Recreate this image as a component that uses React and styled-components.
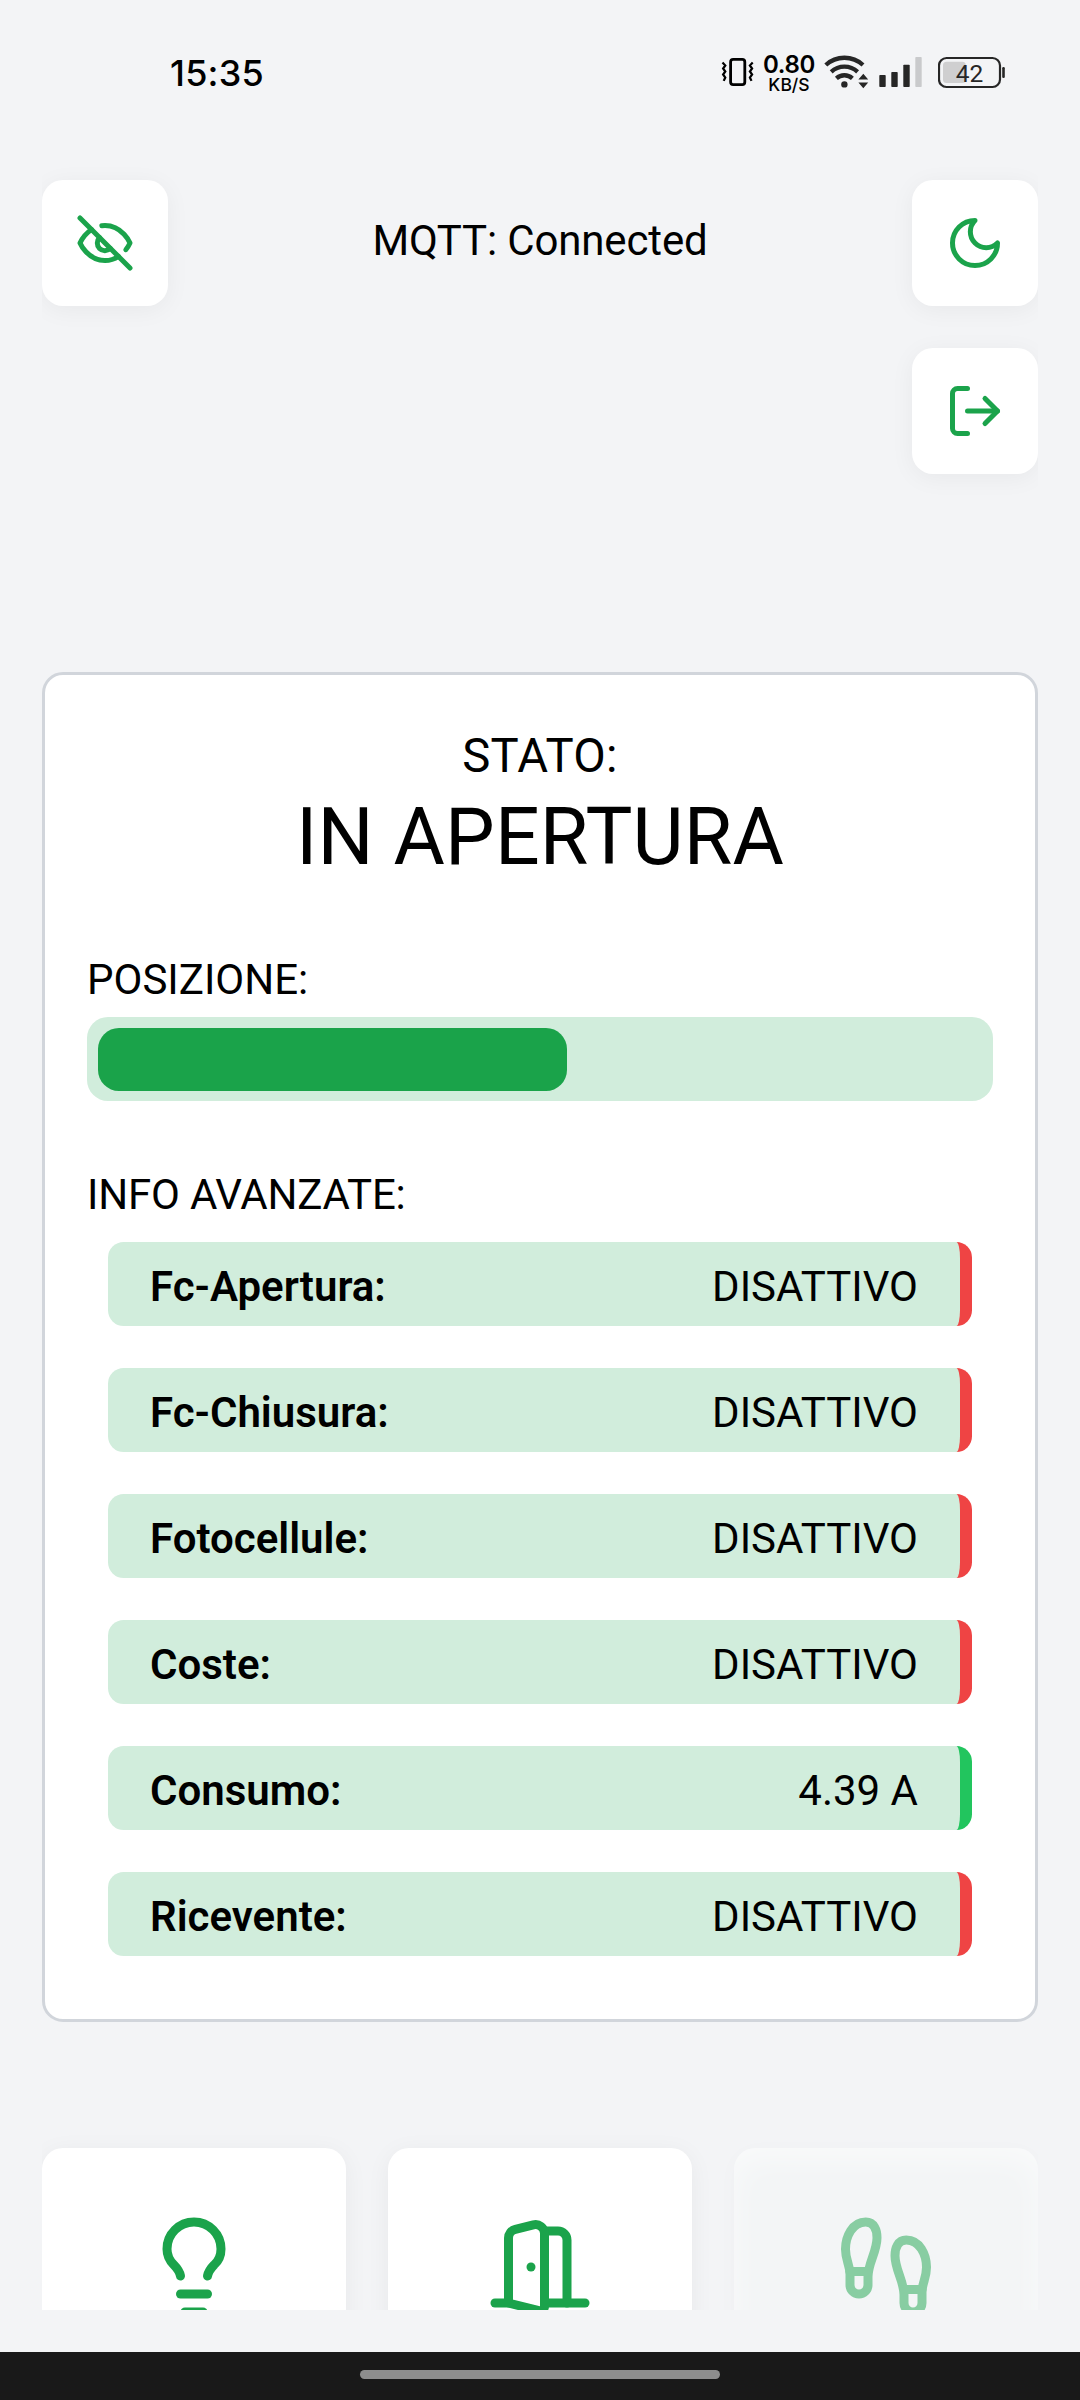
import React from "react";
import styled, { createGlobalStyle, css } from "styled-components";
import { Footprints, Lightbulb } from "lucide-react";

const GlobalStyle = createGlobalStyle`
  * { box-sizing: border-box; }
  body { margin: 0; background: #f3f4f6; }
`;

const Screen = styled.div`
  width: 1080px;
  height: 2400px;
  display: flex;
  flex-direction: column;
  overflow: hidden;
  background: #f3f4f6;
  color: #000;
  font-family: Roboto, "Liberation Sans", sans-serif;
  font-size: 42px;
  line-height: 63px;
`;

const StatusBar = styled.header`
  height: 138px;
  flex: none;
  display: flex;
  align-items: flex-start;
  justify-content: space-between;
  padding: 48px 75px 0 170px;
  font-family: Inter, sans-serif;
`;

const Clock = styled.time`
  padding-top: 1px;
  font-size: 36px;
  line-height: 48px;
  font-weight: 500;
  letter-spacing: 0.2px;
`;

const StatusIcons = styled.div`
  display: flex;
  align-items: flex-start;
`;

const StatusGlyph = styled.svg`
  display: block;
  flex: none;
  margin-right: ${(p) => p.$after || 0}px;
`;

const NetSpeed = styled.div`
  width: 54px;
  margin-right: 8px;
  padding-top: 4px;
  display: flex;
  flex-direction: column;
  align-items: center;
  font-weight: 600;
  white-space: nowrap;
`;

const SpeedValue = styled.span`
  font-size: 24px;
  line-height: 25px;
  letter-spacing: -0.3px;
`;

const SpeedUnit = styled.span`
  font-size: 17.5px;
  font-weight: 500;
  line-height: 15px;
`;

const Battery = styled.div`
  position: relative;
  width: 67px;
  height: 48px;
`;

const BatteryLevel = styled.span`
  position: absolute;
  left: 0;
  top: 10px;
  width: 63px;
  text-align: center;
  font: 400 24.5px/31px Roboto, sans-serif;
  color: #262626;
`;

const Viewport = styled.main`
  height: 2172px;
  flex: none;
  margin: 0 42px;
  padding-top: 42px;
  overflow: hidden;
  display: flex;
  flex-direction: column;
`;

const Toolbar = styled.div`
  height: 492px;
  flex: none;
  display: flex;
  justify-content: space-between;
  align-items: flex-start;
`;

const ToolColumn = styled.div`
  width: 126px;
  display: flex;
  flex-direction: column;
  gap: 42px;
`;

const raised = css`
  background: #fff;
  box-shadow: 0 4px 24px rgba(0, 0, 0, 0.05);
`;

const IconButton = styled.button`
  width: 126px;
  height: 126px;
  padding: 0;
  border: 0;
  border-radius: 21px;
  display: flex;
  align-items: center;
  justify-content: center;
  color: #1ba34b;
  ${raised}
`;

const Connection = styled.div`
  padding-top: 29px;
  letter-spacing: -0.15px;
`;

const StatusCard = styled.section`
  height: 1350px;
  flex: none;
  padding: 42px;
  border: 3px solid #d1d5db;
  border-radius: 21px;
  background: #fff;
`;

const StateCaption = styled.div`
  height: 73px;
  font-size: 47.25px;
  line-height: 79px;
  letter-spacing: 0.3px;
  text-align: center;
`;

const StateValue = styled.div`
  font-size: 78.75px;
  line-height: 94px;
  letter-spacing: 0.15px;
  text-align: center;
`;

const SectionLabel = styled.div`
  margin-top: ${(p) => p.$before}px;
  margin-bottom: ${(p) => p.$after}px;
  letter-spacing: ${(p) => p.$tracking || 0}px;
`;

const Track = styled.div`
  height: 84px;
  padding: 10.5px;
  border-radius: 21px;
  background: #d1eddc;
`;

const TrackFill = styled.div`
  height: 63px;
  border-radius: 21px;
  background: #1aa34a;
`;

const InfoList = styled.dl`
  margin: 0;
  padding: 0 21px;
  display: flex;
  flex-direction: column;
  gap: 42px;
`;

const InfoRow = styled.div`
  height: 84px;
  padding: 5px 42px 0;
  display: flex;
  align-items: center;
  justify-content: space-between;
  border-right: 12px solid ${(p) => (p.$on ? "#22c55e" : "#ef4444")};
  border-radius: 15.75px;
  background: #d1eddc;
`;

const InfoName = styled.dt`
  font-weight: 600;
`;

const InfoValue = styled.dd`
  margin: 0;
`;

const Actions = styled.div`
  margin-top: 126px;
  flex: none;
  display: grid;
  grid-template-columns: repeat(3, 1fr);
  gap: 42px;
`;

const ActionCard = styled.button`
  height: 237px;
  padding: 65px 0 0;
  border: 0;
  border-radius: 21px;
  display: flex;
  align-items: flex-start;
  justify-content: center;
  color: #1ba34b;
  ${raised}
  ${(p) =>
    p.disabled &&
    css`
      color: #88cda2;
      background: #f3f5f6;
      box-shadow: inset 0 10px 32px rgba(255, 255, 255, 0.55), 0 4px 24px rgba(0, 0, 0, 0.02);
    `}
`;

const NavBar = styled.footer`
  height: 48px;
  margin-top: auto;
  flex: none;
  display: flex;
  justify-content: center;
  padding-top: 18px;
  background: #191919;
`;

const NavHandle = styled.div`
  width: 360px;
  height: 9px;
  border-radius: 5px;
  background: #8d8d8d;
`;

function Icon({ size, children }) {
  return (
    <svg
      width={size}
      height={size}
      viewBox="0 0 24 24"
      fill="none"
      stroke="currentColor"
      strokeWidth="2"
      strokeLinecap="round"
      strokeLinejoin="round"
    >
      {children}
    </svg>
  );
}

const EyeOffIcon = () => (
  <Icon size={60}>
    <path d="M9.88 9.88a3 3 0 1 0 4.24 4.24" />
    <path d="M10.73 5.08A10.43 10.43 0 0 1 12 5c7 0 10 7 10 7a13.16 13.16 0 0 1-1.67 2.68" />
    <path d="M6.61 6.61A13.526 13.526 0 0 0 2 12s3 7 10 7a9.74 9.74 0 0 0 5.39-1.61" />
    <path d="M2 2l20 20" />
  </Icon>
);

const MoonIcon = () => (
  <Icon size={60}>
    <path d="M12 3a6 6 0 0 0 9 9 9 9 0 1 1-9-9Z" />
  </Icon>
);

const LogOutIcon = () => (
  <Icon size={60}>
    <path d="M9 21H5a2 2 0 0 1-2-2V5a2 2 0 0 1 2-2h4" />
    <path d="M16 17l5-5-5-5" />
    <path d="M21 12H9" />
  </Icon>
);

const DoorIcon = () => (
  <Icon size={108}>
    <path d="M13 4h3a2 2 0 0 1 2 2v14" />
    <path d="M2 20h3" />
    <path d="M13 20h9" />
    <path d="M10 12v.01" />
    <path d="M13 4.562v16.157a1 1 0 0 1-1.242.97L5 20V5.562a2 2 0 0 1 1.515-1.94l4-1A2 2 0 0 1 13 4.561Z" />
  </Icon>
);

const VibrateIcon = () => (
  <StatusGlyph $after={7} width="34" height="48" viewBox="721 48 34 48" fill="none" stroke="#000">
    <rect x="730.6" y="59.3" width="14.2" height="25.4" rx="2.6" strokeWidth="2.8" />
    <path
      d="M722.5 62.5l2.8 3-2.2 3 2.2 3-2.2 3 2.2 3-1.6 3.4M752.7 62.5l-2.8 3 2.2 3-2.2 3 2.2 3-2.2 3 1.6 3.4"
      strokeWidth="2.2"
    />
  </StatusGlyph>
);

const WifiIcon = () => (
  <StatusGlyph $after={9} width="46" height="48" viewBox="824 48 46 48" fill="none" stroke="#262626">
    <path d="M825.8 65a27.5 27.5 0 0 1 37.2 0" strokeWidth="4.3" />
    <path d="M831.2 71.8a19.6 19.6 0 0 1 26.4 0" strokeWidth="4.3" />
    <path d="M836.4 78.3a12 12 0 0 1 16 0" strokeWidth="4.3" />
    <circle cx="844.4" cy="84.4" r="3.2" fill="#262626" stroke="none" />
    <path d="M858.4 79.4h9.8l-4.9-5.6zM858.4 82.5h9.8l-4.9 5.7z" fill="#262626" stroke="none" />
  </StatusGlyph>
);

const SignalIcon = () => (
  <StatusGlyph $after={15} width="44" height="48" viewBox="879 48 44 48" fill="#262626">
    <rect x="879.3" y="75" width="6.4" height="12" rx="0.8" />
    <rect x="891.3" y="72" width="6.4" height="15" rx="0.8" />
    <rect x="903.3" y="64.7" width="6.4" height="22.3" rx="0.8" />
    <rect x="915.3" y="57" width="6.4" height="30" rx="0.8" fill="#c9cacc" />
  </StatusGlyph>
);

const BatteryIcon = () => (
  <Battery>
    <StatusGlyph width="67" height="48" viewBox="938 48 67 48">
      <rect x="943" y="61.7" width="22.8" height="21.3" rx="3.5" fill="#cfcfd0" />
      <rect x="939" y="58" width="61" height="29" rx="7.5" fill="none" stroke="#262626" strokeWidth="2.2" />
      <rect x="1002.2" y="67" width="2.6" height="11" rx="1.2" fill="#262626" />
    </StatusGlyph>
    <BatteryLevel>42</BatteryLevel>
  </Battery>
);

const sensors = [
  { name: "Fc-Apertura:", value: "DISATTIVO" },
  { name: "Fc-Chiusura:", value: "DISATTIVO" },
  { name: "Fotocellule:", value: "DISATTIVO" },
  { name: "Coste:", value: "DISATTIVO" },
  { name: "Consumo:", value: "4.39 A", on: true },
  { name: "Ricevente:", value: "DISATTIVO" },
];

export default function App() {
  const position = 53;
  return (
    <Screen>
      <GlobalStyle />
      <StatusBar>
        <Clock>15:35</Clock>
        <StatusIcons>
          <VibrateIcon />
          <NetSpeed>
            <SpeedValue>0.80</SpeedValue>
            <SpeedUnit>KB/S</SpeedUnit>
          </NetSpeed>
          <WifiIcon />
          <SignalIcon />
          <BatteryIcon />
        </StatusIcons>
      </StatusBar>

      <Viewport>
        <Toolbar>
          <ToolColumn>
            <IconButton><EyeOffIcon /></IconButton>
          </ToolColumn>
          <Connection>MQTT: Connected</Connection>
          <ToolColumn>
            <IconButton><MoonIcon /></IconButton>
            <IconButton><LogOutIcon /></IconButton>
          </ToolColumn>
        </Toolbar>

        <StatusCard>
          <StateCaption>STATO:</StateCaption>
          <StateValue>IN APERTURA</StateValue>
          <SectionLabel $before={64} $after={6}>POSIZIONE:</SectionLabel>
          <Track>
            <TrackFill style={{ width: `${position}%` }} />
          </Track>
          <SectionLabel $before={62} $after={16} $tracking={-0.2}>INFO AVANZATE:</SectionLabel>
          <InfoList>
            {sensors.map((s) => (
              <InfoRow key={s.name} $on={s.on}>
                <InfoName>{s.name}</InfoName>
                <InfoValue>{s.value}</InfoValue>
              </InfoRow>
            ))}
          </InfoList>
        </StatusCard>

        <Actions>
          <ActionCard><Lightbulb size={108} strokeWidth={2} /></ActionCard>
          <ActionCard><DoorIcon /></ActionCard>
          <ActionCard disabled><Footprints size={108} strokeWidth={2} /></ActionCard>
        </Actions>
      </Viewport>

      <NavBar>
        <NavHandle />
      </NavBar>
    </Screen>
  );
}
